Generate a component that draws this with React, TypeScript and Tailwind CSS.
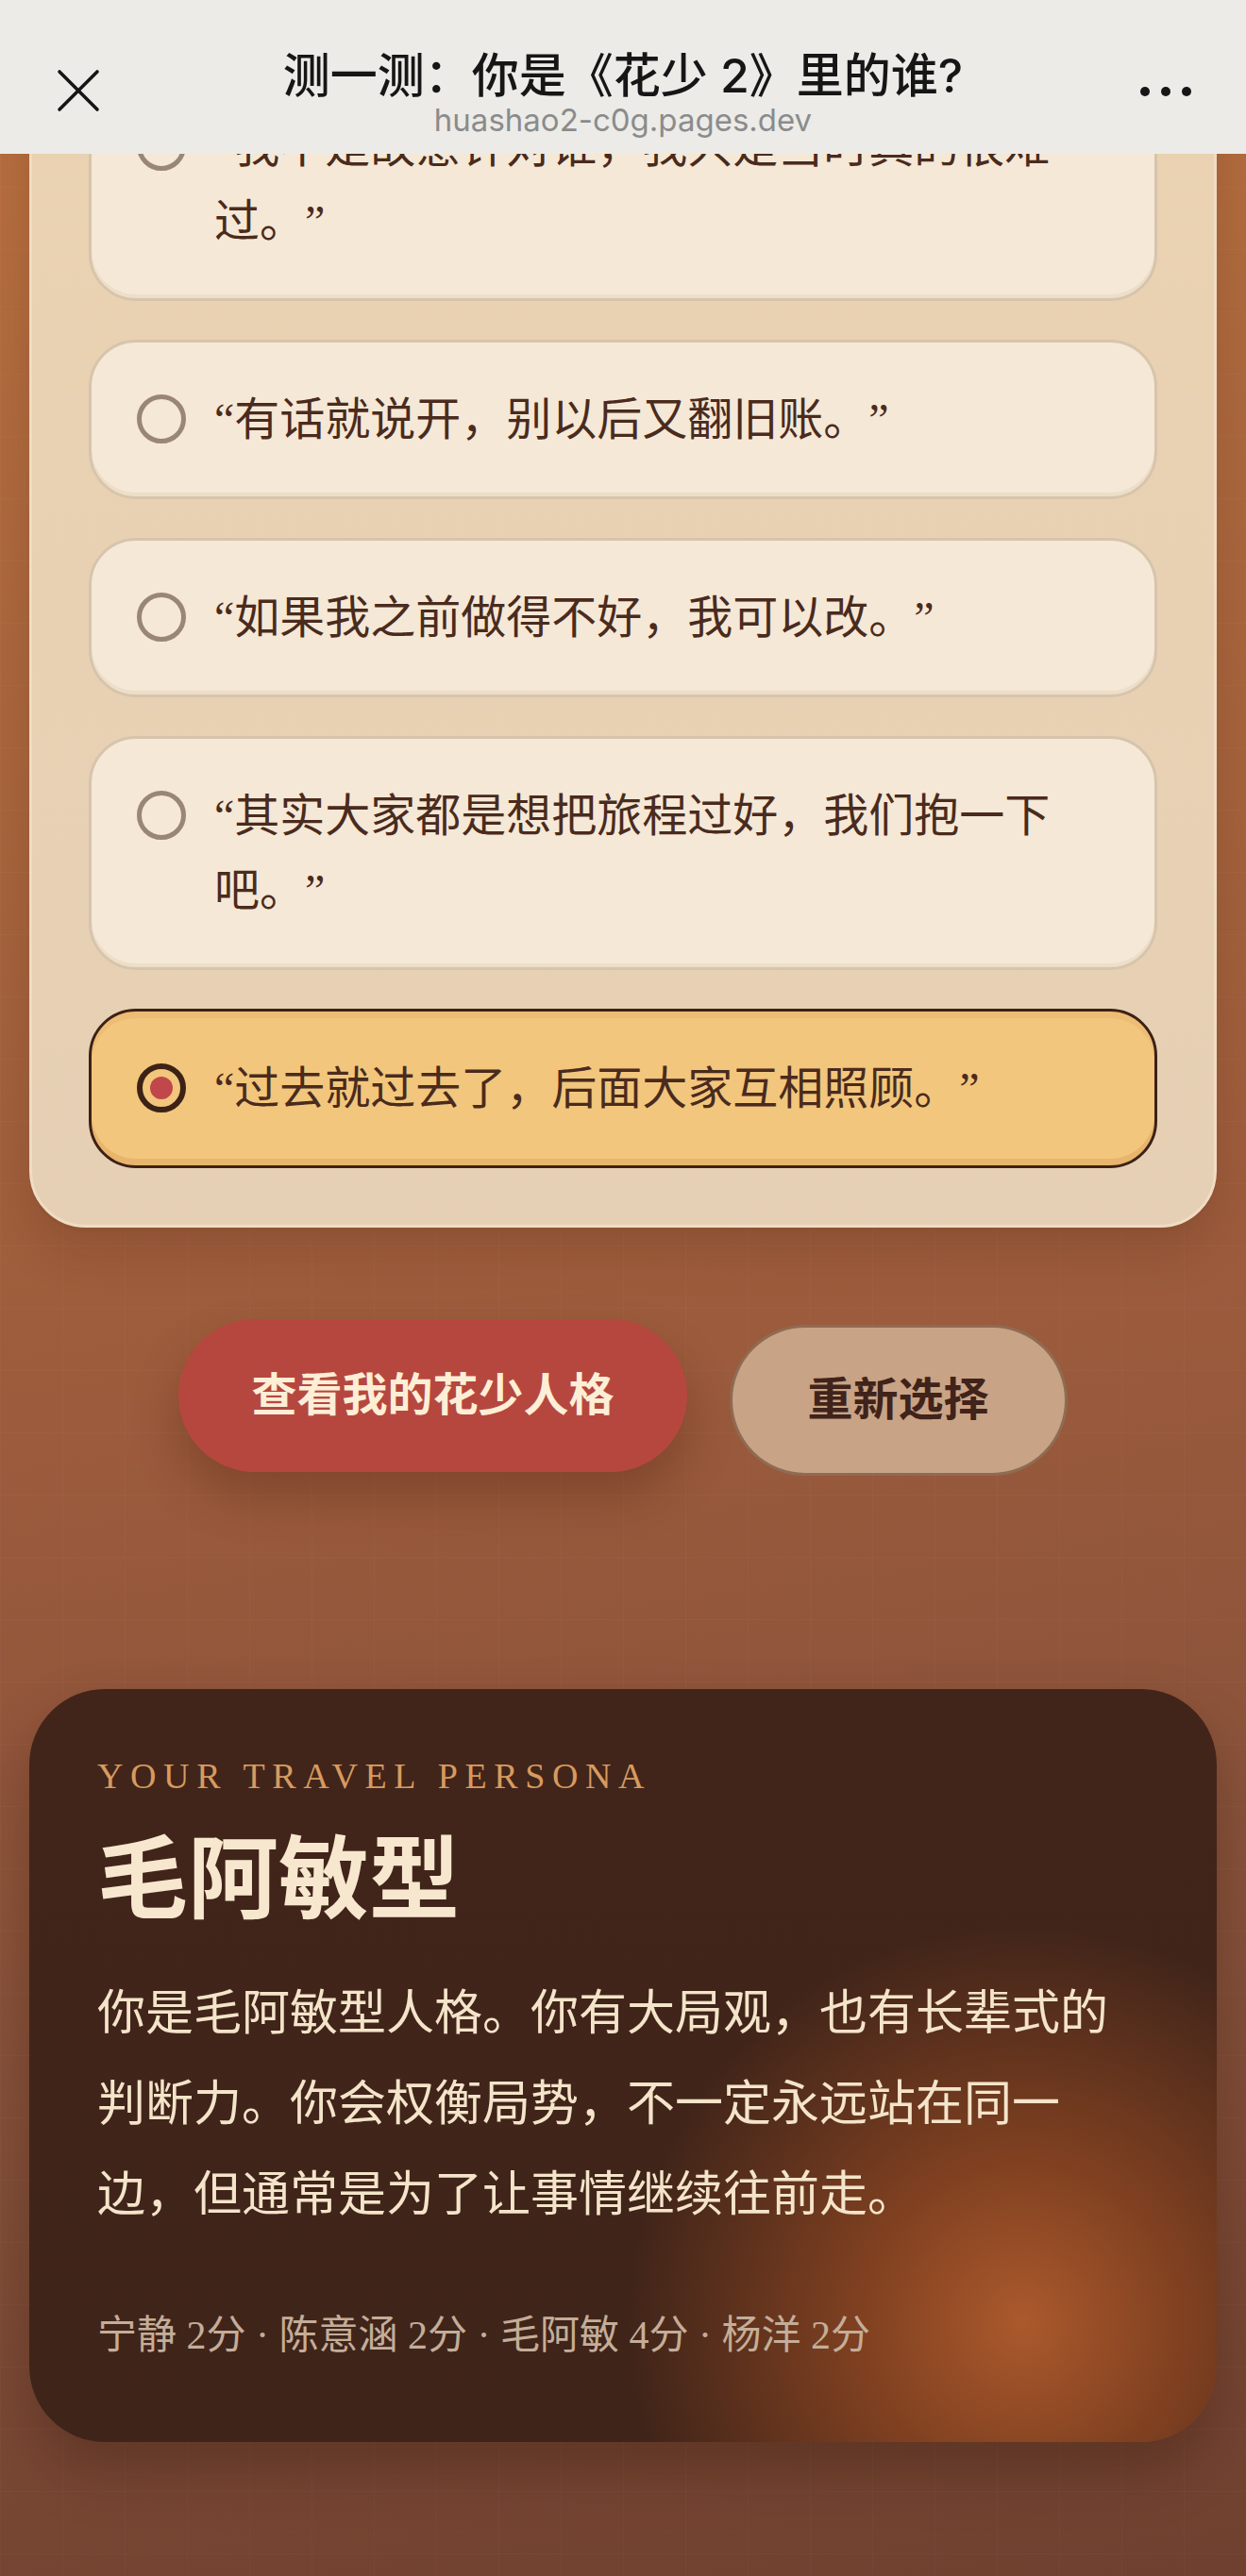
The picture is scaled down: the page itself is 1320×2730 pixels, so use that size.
import React from "react";

const options = [
  { text: "“我不是故意针对谁，我只是当时真的很难过。”", selected: false },
  { text: "“有话就说开，别以后又翻旧账。”", selected: false },
  { text: "“如果我之前做得不好，我可以改。”", selected: false },
  { text: "“其实大家都是想把旅程过好，我们抱一下吧。”", selected: false },
  { text: "“过去就过去了，后面大家互相照顾。”", selected: true },
];

const serif = { fontFamily: '"Liberation Serif", "Noto Sans CJK SC", serif' };

export default function App() {
  return (
    <div
      className="min-h-screen w-full bg-[linear-gradient(172deg,#b9703f_0%,#a8653d_30%,#9a5a3c_55%,#84503a_78%,#6f402f_100%)] text-[#4a2b1d] [text-spacing-trim:space-all]"
      style={serif}
    >
      {/* in-app browser bar */}
      <header
        className="fixed inset-x-0 top-0 z-10 h-[163px] bg-[#ecebe8]"
        style={{ fontFamily: 'Inter, "Noto Sans CJK SC", sans-serif' }}
      >
        <div className="relative flex h-full flex-col items-center pt-[54px]">
          <button className="absolute left-[60px] top-[73px] h-[46px] w-[46px] text-[#151515]">
            <svg viewBox="0 0 46 46" className="h-full w-full">
              <path d="M3 3 L43 43 M43 3 L3 43" stroke="currentColor" strokeWidth="3.6" strokeLinecap="round" />
            </svg>
          </button>
          <h1 className="text-[50px] font-medium leading-[52px] text-[#161616]">
            测一测：你是《花少 2》里的谁?
          </h1>
          <p className="mt-[2px] text-[33px] leading-[38px] text-[#8b8b8b]">huashao2-c0g.pages.dev</p>
          <div className="absolute right-[58px] top-[92px] flex gap-[12px]">
            <span className="h-[10px] w-[10px] rounded-full bg-[#161616]" />
            <span className="h-[10px] w-[10px] rounded-full bg-[#161616]" />
            <span className="h-[10px] w-[10px] rounded-full bg-[#161616]" />
          </div>
        </div>
      </header>

      <div className="bg-[linear-gradient(rgba(255,255,255,0.025)_1px,transparent_1px),linear-gradient(90deg,rgba(255,255,255,0.025)_1px,transparent_1px)] bg-[size:66px_66px] pt-[6px] pb-[144px]">
        {/* question card */}
        <section className="mx-[31px] rounded-[60px] border-[3px] border-[#efdcc3] bg-[linear-gradient(180deg,#ead2b1_0%,#e6d0b5_100%)] px-[60px] pt-[62px] pb-[60px] shadow-[0_4px_0_rgba(140,80,45,0.25),0_24px_50px_rgba(60,25,10,0.18)]">
          <div className="flex flex-col gap-[41px]">
            {options.map((o) => (
              <div
                key={o.text}
                className={
                  o.selected
                    ? "flex items-start gap-[30px] rounded-[50px] border-[3px] border-[#3d2115] bg-[#f2c67c] py-[42px] pl-[48px] pr-[48px] shadow-[inset_0_-7px_0_rgba(214,150,80,0.35),inset_0_7px_0_rgba(225,165,95,0.25)]"
                    : "flex items-start gap-[30px] rounded-[50px] border-[3px] border-[#d7c4ac] bg-[#f5e8d6] py-[42px] pl-[48px] pr-[48px] shadow-[inset_0_-4px_0_rgba(215,190,160,0.25)]"
                }
              >
                {o.selected ? (
                  <span className="mt-[13px] flex h-[52px] w-[52px] shrink-0 items-center justify-center rounded-full border-[6px] border-[#3d2216]">
                    <span className="h-[24px] w-[24px] rounded-full bg-[#c0474a]" />
                  </span>
                ) : (
                  <span className="mt-[13px] h-[52px] w-[52px] shrink-0 rounded-full border-[5px] border-[#998676]" />
                )}
                <p className="text-[48px] leading-[79px] text-[#4a2b1d]">{o.text}</p>
              </div>
            ))}
          </div>
        </section>

        {/* actions */}
        <div className="mt-[102px] flex items-center justify-center gap-[45px]">
          <button className="h-[162px] -translate-y-[5px] rounded-full bg-[#b6473f] px-[77px] text-[48px] font-bold text-[#fdeed6] shadow-[0_26px_50px_rgba(70,25,10,0.3)]">
            查看我的花少人格
          </button>
          <button className="h-[160px] rounded-full border-[3px] border-[#8f6b53] bg-[#c9a385] px-[80px] text-[48px] font-bold text-[#40231a]">
            重新选择
          </button>
        </div>

        {/* result */}
        <section className="mx-[31px] mt-[225px] rounded-[80px] bg-[radial-gradient(circle_420px_at_1052px_671px,#ab592c_0%,rgba(140,70,34,0.85)_40%,rgba(66,37,26,0)_100%),linear-gradient(180deg,#42251a_0%,#3f2419_100%)] px-[72px] pt-[66px] pb-[81px] shadow-[0_30px_60px_rgba(40,15,5,0.3)]">
          <p className="text-[38px] leading-[53px] tracking-[0.2em] text-[#d89a5f]">YOUR TRAVEL PERSONA</p>
          <h2 className="mt-[29px] text-[96px] font-bold leading-[110px] text-[#f7e7cf]">毛阿敏型</h2>
          <p className="mt-[38px] text-[51px] leading-[96px] text-[#f4e4ca]">
            你是毛阿敏型人格。你有大局观，也有长辈式的判断力。你会权衡局势，不一定永远站在同一边，但通常是为了让事情继续往前走。
          </p>
          <p className="mt-[70px] text-[42px] leading-[63px] text-[#c4ad99]">
            宁静 2分 · 陈意涵 2分 · 毛阿敏 4分 · 杨洋 2分
          </p>
        </section>
      </div>
    </div>
  );
}
